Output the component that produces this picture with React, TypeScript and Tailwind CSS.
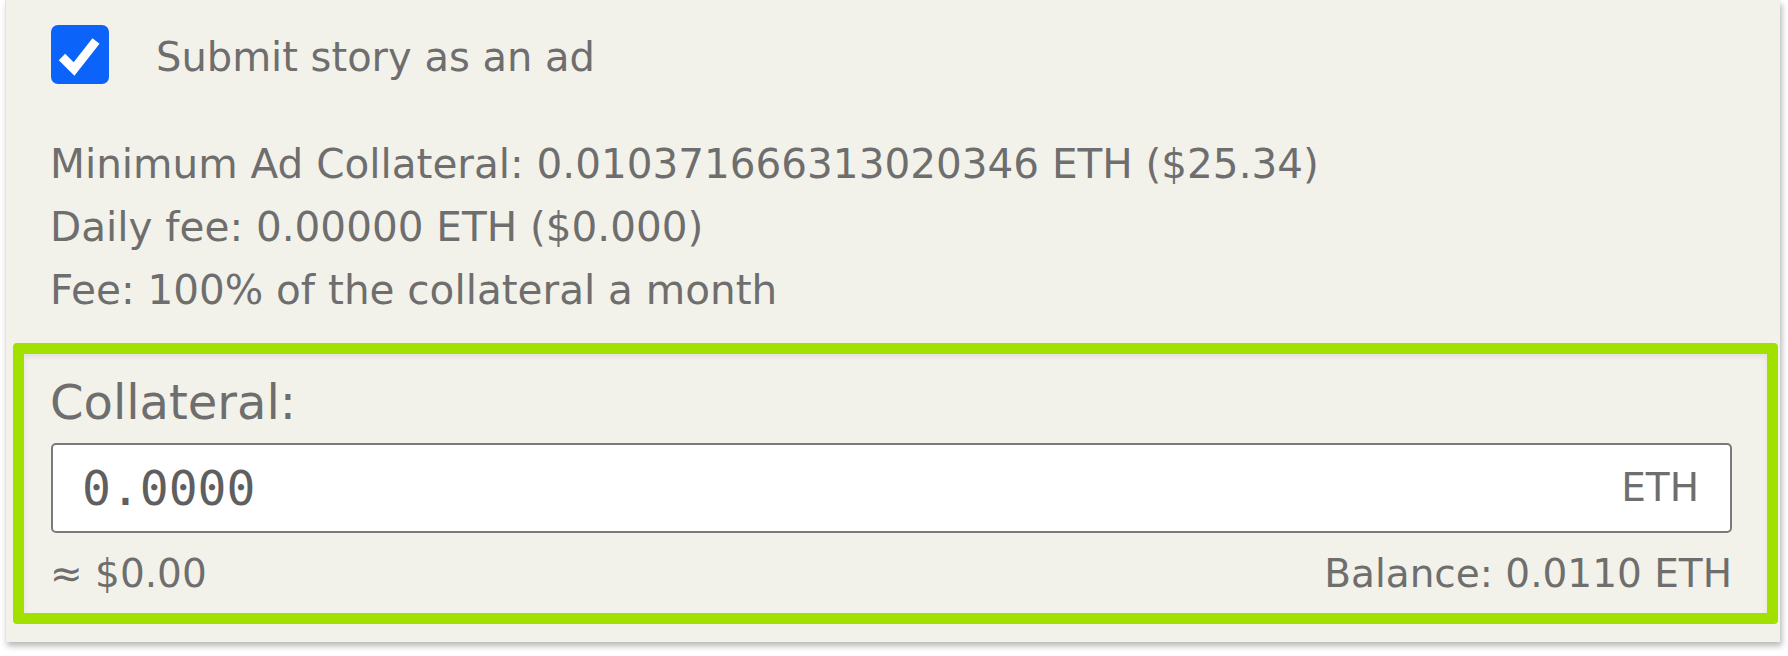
import React from "react";

const sans = { fontFamily: '"DejaVu Sans", Verdana, sans-serif' };

function CheckBox() {
  return (
    <div className="w-[58px] h-[59px] rounded-[7px] bg-[#0b63fa] shrink-0">
      <svg width="58" height="59" viewBox="0 0 58 59">
        <path d="M11 32 L23 44 L45 16" fill="none" stroke="#fff" strokeWidth="9" strokeLinecap="butt" strokeLinejoin="miter" />
      </svg>
    </div>
  );
}

export default function App() {
  return (
    <div className="w-[1788px] h-[656px] bg-white text-[#6e6e6e]" style={sans}>
      <div className="ml-[5px] w-[1775px] h-[642px] bg-[#f3f2ea] border-l border-[#e4e3dc] shadow-[2px_4px_6px_rgba(0,0,0,0.28)] pt-[25px]">
        <div className="pl-[45px] flex items-center gap-[47px]">
          <CheckBox />
          <span className="text-[40px] leading-[48px] mt-[4px]">Submit story as an ad</span>
        </div>

        <div className="pl-[44px] mt-[49px] text-[40.5px] leading-[63px]">
          <p>Minimum Ad Collateral: 0.010371666313020346 ETH ($25.34)</p>
          <p>Daily fee: 0.00000 ETH ($0.000)</p>
          <p>Fee: 100% of the collateral a month</p>
        </div>

        <div className="ml-[7px] mt-[21px] w-[1765px] border-[11px] border-[#a2e000] rounded-[4px] shadow-[inset_0_3px_5px_rgba(0,0,0,0.07)] pl-[27px] pr-[35px] pt-[20px] pb-[15px]">
          <div className="text-[48px] leading-[56px] -ml-[1px]">Collateral:</div>
          <div className="mt-[13px] h-[90px] bg-white border-2 border-[#7a7a7a] rounded-[5px] flex items-center justify-between pl-[29px] pr-[31px]">
            <span className="text-[48px] text-[#5f5f5f]" style={{ fontFamily: '"DejaVu Sans Mono", monospace' }}>
              0.0000
            </span>
            <span className="text-[39px]">ETH</span>
          </div>
          <div className="mt-[17px] flex justify-between text-[39px] leading-[48px]">
            <span className="-ml-[1px]">≈ $0.00</span>
            <span>Balance: 0.0110 ETH</span>
          </div>
        </div>
      </div>
    </div>
  );
}
